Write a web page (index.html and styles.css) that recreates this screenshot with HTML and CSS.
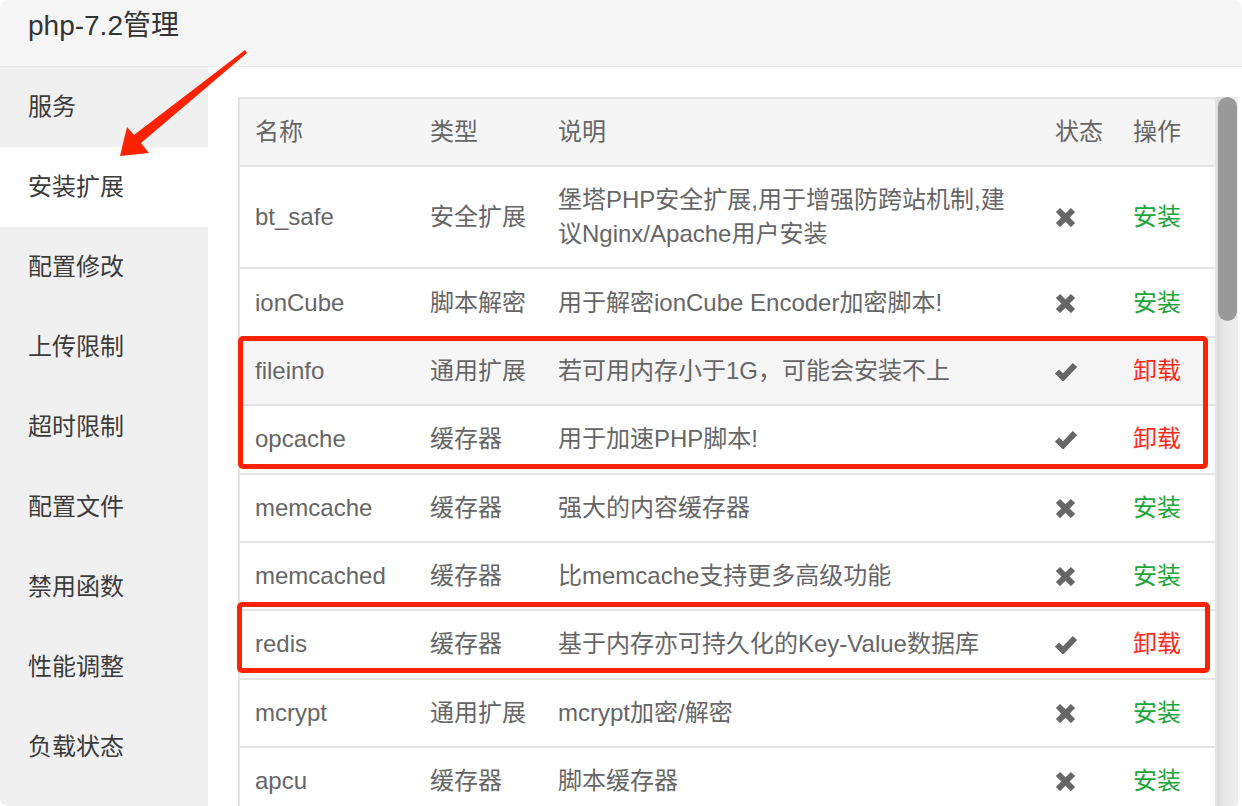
FILE: index.html
```html
<!DOCTYPE html>
<html lang="zh-CN">
<head>
<meta charset="utf-8">
<title>php-7.2管理</title>
<link rel="stylesheet" href="styles.css">
</head>
<body>
<div class="window">
  <header class="title-bar">php-7.2管理</header>
  <div class="layout">
    <nav class="sidebar">
      <div class="nav-item">服务</div>
      <div class="nav-item active">安装扩展</div>
      <div class="nav-item">配置修改</div>
      <div class="nav-item">上传限制</div>
      <div class="nav-item">超时限制</div>
      <div class="nav-item">配置文件</div>
      <div class="nav-item">禁用函数</div>
      <div class="nav-item">性能调整</div>
      <div class="nav-item">负载状态</div>
    </nav>
    <main class="content">
      <div class="table-wrap">
        <table class="ext-table">
          <thead>
            <tr>
              <th class="c-name">名称</th>
              <th class="c-type">类型</th>
              <th class="c-desc">说明</th>
              <th class="c-status">状态</th>
              <th class="c-op">操作</th>
            </tr>
          </thead>
          <tbody>
            <tr>
              <td>bt_safe</td><td>安全扩展</td>
              <td>堡塔PHP安全扩展,用于增强防跨站机制,建议Nginx/Apache用户安装</td>
              <td><svg class="ico" viewBox="0 0 21 20"><path d="M3 3 L18 18 M18 3 L3 18"/></svg></td>
              <td><span class="op install">安装</span></td>
            </tr>
            <tr>
              <td>ionCube</td><td>脚本解密</td>
              <td>用于解密ionCube Encoder加密脚本!</td>
              <td><svg class="ico" viewBox="0 0 21 20"><path d="M3 3 L18 18 M18 3 L3 18"/></svg></td>
              <td><span class="op install">安装</span></td>
            </tr>
            <tr class="hover">
              <td>fileinfo</td><td>通用扩展</td>
              <td>若可用内存小于1G，可能会安装不上</td>
              <td><svg class="ico ok" viewBox="0 0 24 20"><path d="M3 10.5 L9 16.5 L21 4"/></svg></td>
              <td><span class="op uninstall">卸载</span></td>
            </tr>
            <tr>
              <td>opcache</td><td>缓存器</td>
              <td>用于加速PHP脚本!</td>
              <td><svg class="ico ok" viewBox="0 0 24 20"><path d="M3 10.5 L9 16.5 L21 4"/></svg></td>
              <td><span class="op uninstall">卸载</span></td>
            </tr>
            <tr>
              <td>memcache</td><td>缓存器</td>
              <td>强大的内容缓存器</td>
              <td><svg class="ico" viewBox="0 0 21 20"><path d="M3 3 L18 18 M18 3 L3 18"/></svg></td>
              <td><span class="op install">安装</span></td>
            </tr>
            <tr>
              <td>memcached</td><td>缓存器</td>
              <td>比memcache支持更多高级功能</td>
              <td><svg class="ico" viewBox="0 0 21 20"><path d="M3 3 L18 18 M18 3 L3 18"/></svg></td>
              <td><span class="op install">安装</span></td>
            </tr>
            <tr>
              <td>redis</td><td>缓存器</td>
              <td>基于内存亦可持久化的Key-Value数据库</td>
              <td><svg class="ico ok" viewBox="0 0 24 20"><path d="M3 10.5 L9 16.5 L21 4"/></svg></td>
              <td><span class="op uninstall">卸载</span></td>
            </tr>
            <tr>
              <td>mcrypt</td><td>通用扩展</td>
              <td>mcrypt加密/解密</td>
              <td><svg class="ico" viewBox="0 0 21 20"><path d="M3 3 L18 18 M18 3 L3 18"/></svg></td>
              <td><span class="op install">安装</span></td>
            </tr>
            <tr>
              <td>apcu</td><td>缓存器</td>
              <td>脚本缓存器</td>
              <td><svg class="ico" viewBox="0 0 21 20"><path d="M3 3 L18 18 M18 3 L3 18"/></svg></td>
              <td><span class="op install">安装</span></td>
            </tr>
          </tbody>
        </table>
      </div>
      <div class="scrollbar"><div class="thumb"></div></div>
    </main>
  </div>

  <div class="mark mark-1"></div>
  <div class="mark mark-2"></div>
  <svg class="arrow" viewBox="0 0 260 170" width="260" height="170">
    <polygon points="245,50 247,53 141,143 149,153 120,156 127,127 134,135"/>
  </svg>
</div>
</body>
</html>
```
FILE: styles.css
```css
* { box-sizing: border-box; }

html, body {
  margin: 0;
  padding: 0;
  background: #ffffff;
}

body {
  font-family: "Liberation Sans", "Noto Sans CJK SC", sans-serif;
}

.window {
  position: relative;
  width: 1242px;
  height: 806px;
  overflow: hidden;
  border-radius: 8px;
  background: #ffffff;
}

.title-bar {
  height: 67px;
  padding: 2px 28px 0;
  background: #f6f6f6;
  border-bottom: 1px solid #e9e9e9;
  font-size: 28px;
  line-height: 48px;
  color: #333333;
}

.layout {
  display: flex;
  height: 739px;
}

.sidebar {
  width: 208px;
  flex: none;
  background: #f0f0f0;
}

.nav-item {
  height: 80px;
  line-height: 80px;
  padding-left: 28px;
  font-size: 24px;
  color: #3b3b3b;
}

.nav-item.active {
  background: #ffffff;
}

.content {
  flex: 1;
  display: flex;
  padding: 30px 4px 0 30px;
  overflow: hidden;
}

.table-wrap {
  width: 979px;
  flex: none;
}

.ext-table {
  width: 979px;
  table-layout: fixed;
  border-collapse: collapse;
  border: 2px solid #e4e4e4;
  font-size: 24px;
  color: #666666;
}

.ext-table th,
.ext-table td {
  text-align: left;
  font-weight: normal;
  vertical-align: middle;
  padding: 16.2px 10px 16.2px 15px;
  line-height: 34px;
  border-bottom: 2px solid #e4e4e4;
}

.ext-table thead th {
  background: #f5f5f5;
  padding-top: 16px;
  padding-bottom: 16px;
}

.c-name { width: 176px; }
.c-type { width: 128px; }
.c-desc { width: 497px; }
.c-status { width: 78px; }

.ext-table td:nth-child(3) { padding-right: 20px; }

.ext-table tr.hover td { background: #f6f6f6; }

.ico {
  display: block;
  width: 21px;
  height: 20px;
  fill: none;
  stroke: #666666;
  stroke-width: 6;
}

.ico.ok {
  width: 24px;
  margin-left: -1px;
  stroke-width: 6;
}

.op { font-size: 24px; }
.op.install { color: #20a53a; }
.op.uninstall { color: #ff2a1a; }

.scrollbar {
  width: 21px;
  flex: none;
  background: linear-gradient(to right, #dadada, #e9e9e9 35%, #efefef);
  padding-left: 1px;
}

.thumb {
  width: 19px;
  height: 224px;
  border-radius: 10px;
  background: #999999;
}

.mark {
  position: absolute;
  border: 5px solid #ff2200;
  border-radius: 5px;
}

.mark-1 { left: 238px; top: 336px; width: 970px; height: 133px; }
.mark-2 { left: 237px; top: 602px; width: 973px; height: 71px; }

.arrow {
  position: absolute;
  left: 0;
  top: 0;
}

.arrow polygon { fill: #ff2200; }
```
